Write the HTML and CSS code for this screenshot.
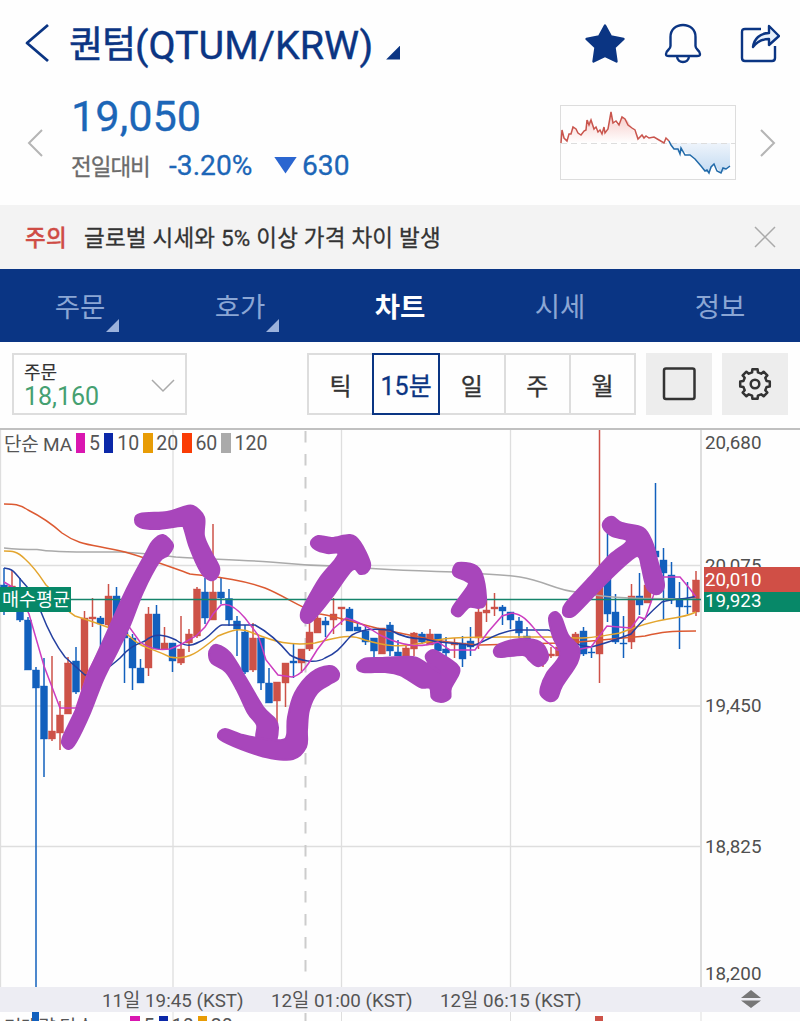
FILE: index.html
```html
<!DOCTYPE html>
<html lang="ko">
<head>
  <meta charset="UTF-8" />
  <title>퀀텀(QTUM/KRW)</title>
  <link rel="stylesheet" href="styles.css">
</head>
<body>
  <header class="topbar">
    <svg class="back" width="26" height="42" viewBox="0 0 26 42"><path d="M24 3L3 21L24 39" /></svg>
    <h1><span class="name">퀀텀</span><span class="pair">(QTUM/KRW)</span></h1>
    <span class="corner corner-title"></span>
    <div class="actions">
      <svg width="42" height="42" viewBox="0 0 42 42"><path class="star" d="M21 3.500L27 14.500L39.500 17L30.500 25.500L32.500 39.500L21 34L9.500 39.500L11.500 25.500L2.500 17L15 14.500Z" /></svg>
      <svg width="38" height="42" viewBox="0 0 38 42"><path d="M6.500 24V15C6.500 7.500 12 3 19 3S31.500 7.500 31.500 15V24C31.500 28 36 28 36 32C36 34 35 34 33 34H5C3 34 2 34 2 32C2 28 6.500 28 6.500 24ZM13 34C13 42 25 42 25 34" /></svg>
      <svg width="40" height="42" viewBox="0 0 40 42"><path d="M21 7H5Q2 7 2 10V36Q2 39 5 39H32Q35 39 35 36V24" /><path class="arrow" d="M13 25C14 17 20 11 29 11V4L39 14L29 23V17C22 17 17 20 13 25Z" /></svg>
    </div>
  </header>

  <section class="quote">
    <svg class="prev" width="16" height="28" viewBox="0 0 16 28"><path d="M15 1L2 14L15 27" /></svg>
    <div class="price">
      <strong>19,050</strong>
      <div class="change">
        <span class="label">전일대비</span>
        <span class="rate">-3.20%</span>
        <span class="down"></span>
        <span class="diff">630</span>
      </div>
    </div>
    <svg class="spark" width="176" height="75" viewBox="0 0 176 75">
      <defs>
        <linearGradient id="up" x1="0" y1="0" x2="0" y2="1"><stop offset="0" stop-color="#f6c5c2" /><stop offset="1" stop-color="#fff" /></linearGradient>
        <linearGradient id="dn" x1="0" y1="0" x2="0" y2="1"><stop offset="0" stop-color="#eef4fb" /><stop offset="1" stop-color="#c3dbf2" /></linearGradient>
      </defs>
      <rect class="frame" x=".5" y=".5" width="175" height="74" />
      <path class="area-up" d="M1 38L2 25L6 36L10 29L13 21L20 30L25 25L27 15L31 16L35 25L42 28L47 27L51 7L53 18L59 20L63 12L68 16L74 26L79 32L84 31L94 33L103 37L110 38Z" />
      <path class="area-dn" d="M110 38L113 43L119 48L125 47L134 52L145 66L149 68L154 59L161 68L170 62V38Z" />
      <path class="base" d="M1 38.500H175" />
      <path class="spark-up" d="M1 38L2 25L4 33L7 36L9 29L11 29L13 22L16 24L18 28L21 30L24 26L26 25L27 15L29 20L31 15L34 24L36 22L38 27L40 25L42 29L44 22L45 28L48 24L51 7L53 18L56 16L59 20L62 12L65 14L68 20L72 23L75 25L78 34L82 30L84 33L86 31L89 33L94 32L99 35L104 38L106 33L109 36" />
      <path class="spark-dn" d="M109 36L111 40L114 44L118 44L120 49L121 43L125 50L130 50L135 54L141 61L145 66L147 65L149 68L151 62L154 59L157 66L161 68L163 63L166 64L170 61" />
    </svg>
    <svg class="next" width="16" height="28" viewBox="0 0 16 28"><path d="M1 1L14 14L1 27" /></svg>
  </section>

  <div class="notice">
    <b>주의</b>
    <span>글로벌 시세와 5% 이상 가격 차이 발생</span>
    <svg width="22" height="22" viewBox="0 0 22 22"><path d="M1 1L21 21M21 1L1 21" /></svg>
  </div>

  <nav class="tabs">
    <a>주문<i class="corner"></i></a>
    <a>호가<i class="corner"></i></a>
    <a class="active">차트</a>
    <a>시세</a>
    <a>정보</a>
  </nav>

  <div class="toolbar">
    <div class="order">
      <div>
        <div class="order-label">주문</div>
        <div class="order-price">18,160</div>
      </div>
      <svg width="24" height="14" viewBox="0 0 24 14"><path d="M1 1L12 12L23 1" /></svg>
    </div>
    <div class="periods">
      <button>틱</button>
      <button class="selected">15분</button>
      <button>일</button>
      <button>주</button>
      <button>월</button>
    </div>
    <button class="tool"><svg width="34" height="34" viewBox="0 0 34 34"><rect x="2" y="1.500" width="30.500" height="30.500" rx="2" /></svg></button>
    <button class="tool"><svg width="34" height="34" viewBox="0 0 34 34"><path d="M14.400 2.200H19.600L19.900 5.400L23.200 6.700L25.600 4.700L29.300 8.400L27.300 10.800L28.600 14.100L31.800 14.400V19.600L28.600 19.900L27.300 23.200L29.300 25.600L25.600 29.300L23.200 27.300L19.900 28.600L19.600 31.800H14.400L14.100 28.600L10.800 27.300L8.400 29.300L4.700 25.600L6.700 23.200L5.400 19.900L2.200 19.600V14.400L5.400 14.100L6.700 10.800L4.700 8.400L8.400 4.700L10.800 6.700L14.100 5.400Z" /><circle cx="17" cy="17" r="4.300" /></svg></button>
  </div>

  <main class="chart">
    <div class="legend">
      <span class="ma-name">단순 MA</span><i class="m5"></i><span>5</span><i class="m10"></i><span>10</span><i class="m20"></i><span>20</span><i class="m60"></i><span>60</span><i class="m120"></i><span>120</span>
    </div>
    <svg class="plot" width="800" height="558" viewBox="0 429 800 558">
      <g class="grid">
        <path d="M.5 429V987M173 429V987M341.500 429V987M510.500 429V987M0 565.500H701M0 706H701M0 846.500H701" />
        <path class="edge" d="M701 429V987" />
        <path class="day" d="M305.500 431V979" />
      </g>
      <g id="candles"></g>
      <g class="ma">
        <path class="l120" d="M4 548C14 549 25 549.500 37 549.500C50 552 70 552.500 120 552C145 553 160 555 176 557C200 559 240 559.500 270 562C300 565 320 566 345 566.500C370 569 420 571 455 572C480 574 500 574 520 577C545 581 555 590 576 592C600 597 620 598 645 598.500L696 599" />
        <path class="l60" d="M4 504C13 504 20 504 28 510C44 518 52 524 62 533C80 546 92 544 125 552C150 559 170 567 190 574C215 577 240 579 265 588C285 596 300 608 320 614C345 618 370 628 395 632C415 636 440 643 480 645L560 643C600 641 620 638 645 636C662 632 670 631 696 631" />
        <path class="l20" d="M4 551C12 551 17 551 25 559C35 568 40 576 46 585C55 592 60 607 75 616C95 622 110 628 128 635C142 649 150 647 170 657C188 661 200 651 218 636C232 630 240 627 253 633C275 642 290 646 315 643C335 638 348 633 365 640C385 646 400 648 423 643C450 635 480 638 500 637L560 637C585 640 600 636 620 633C640 625 655 621 668 619C682 617 690 615 696 612" />
        <path class="l10" d="M4 568C12 569 13 570 21 580C30 590 35 595 41 612C48 630 58 648 65 657L85 675C100 675 110 667 120 658C130 646 138 644 145 641C155 632 165 635 176 640C184 646 190 647 199 642C210 638 216 626 222 625H255C270 633 280 643 290 655C300 661 316 664 325 658C340 652 345 641 352 635C365 628 375 629 390 630C400 636 412 639 425 639C440 644 455 642 472 646C485 642 497 632 515 630L548 630C565 634 570 646 591 647C604 644 615 640 631 634C645 617 654 609 662 602C675 598 685 600 696 596" />
        <path class="l5" d="M4 582L16 589L29 614L44 666L60 708H76L88 672L108 634L125 621L140 642C152 650 160 650 170 649L180 645L196 636L205 627L213 614L221 605C228 603 235 606 245 618L258 635L266 660L278 675L292 677C303 675 310 661 317 650L333 629L346 618C358 621 371 629 380 635L391 640C407 646 420 648 438 642L450 650H475L488 632L502 616L512 613C528 615 532 629 546 641L557 650H575L591 647L607 626L631 628L639 617L645 619L655 591L663 577H680L690 589L696 597" />
      </g>
      <path class="avg-line" d="M0 599.500H701" />
      <g id="pen"></g>
      <g class="axis">
        <text x="705" y="449">20,680</text>
        <text x="705" y="572">20,075</text>
        <text x="705" y="712">19,450</text>
        <text x="705" y="853">18,825</text>
        <text x="705" y="980">18,200</text>
      </g>
      <rect class="tag-avg" x="704" y="592" width="96" height="20" />
      <rect class="tag-now" x="704" y="567" width="96" height="25" />
      <text class="tag" x="705" y="586">20,010</text>
      <text class="tag" x="705" y="607">19,923</text>
      <rect class="tag-avg" x="0" y="587" width="71" height="25" />
      <text class="tag tag-name" x="2" y="606">매수평균</text>
    </svg>
  </main>

  <div class="times">
    <span>11일 19:45 (KST)</span>
    <span>12일 01:00 (KST)</span>
    <span>12일 06:15 (KST)</span>
    <svg width="20" height="18" viewBox="0 0 20 18"><path d="M0 8L10 0L20 8ZM0 10.500H20L10 18Z" /></svg>
  </div>

  <div class="volume">
    <svg width="800" height="9" viewBox="0 0 800 9">
      <path class="vgrid" d="M173 0V9M341.500 0V9M510.500 0V9M701 0V9" />
      <path class="vday" d="M305.500 1V9" />
      <rect class="vup" x="595" y="4" width="8" height="5" />
    </svg>
    <div class="legend">
      <span class="ma-name">거래량 단순 MA</span><i class="m5"></i><span>5</span><i class="m10"></i><span>10</span><i class="m20"></i><span>20</span>
    </div>
    <div class="vdown"></div>
  </div>

  <script src="script.js"></script>
</body>
</html>
```

FILE: styles.css
```css
* {
  box-sizing: border-box;
}
body {
  margin: 0;
  width: 800px;
  height: 1021px;
  overflow: hidden;
  background: #fefefe;
  color: #333;
  font-family: Roboto, "Noto Sans CJK KR", sans-serif;
}
svg {
  display: block;
  flex: none;
}
path {
  fill: none;
}

/* header */
.topbar {
  display: flex;
  align-items: center;
  height: 88px;
  padding: 0 20px 0 24px;
}
.topbar svg {
  stroke: #0b3583;
  stroke-width: 2.4;
  stroke-linejoin: round;
}
h1 {
  display: flex;
  align-items: center;
  margin: 4px 0 0 19px;
  color: #0b3583;
  font-size: 39.5px;
  font-weight: 400;
  line-height: 50px;
  white-space: nowrap;
}
.name {
  font-size: 37px;
  letter-spacing: -1px;
  -webkit-text-stroke: 0.5px;
}
.pair {
  -webkit-text-stroke: 0.4px;
}
.corner {
  width: 14px;
  height: 14px;
  background: #0b3583;
  clip-path: polygon(100% 0, 100% 100%, 0 100%);
}
.corner-title {
  margin: 17px 0 0 13px;
}
.topbar .back {
  stroke-width: 2.8;
  margin-bottom: 2px;
}
.actions {
  display: flex;
  gap: 38px;
  margin: 0 0 2px auto;
}
.actions .star {
  fill: #0b3583;
}
.actions .arrow {
  fill: #e6effa;
}

/* current price */
.quote {
  display: flex;
  height: 117px;
  padding: 6px 24px 0 27px;
}
.prev,
.next {
  margin-top: 35px;
  stroke: #b5b5b5;
  stroke-width: 2;
}
.price {
  width: 489px;
  margin-left: 28px;
  color: #1c66b7;
  -webkit-text-stroke: 0.3px;
}
.price strong {
  display: block;
  font-size: 43.3px;
  font-weight: 400;
  line-height: 46px;
}
.change {
  display: flex;
  align-items: center;
  height: 50px;
  font-size: 28.2px;
  white-space: nowrap;
}
.label {
  width: 98px;
  color: #6b6b6b;
  font-size: 22.5px;
  letter-spacing: -1px;
}
.rate {
  width: 105px;
}
.down {
  width: 23px;
  height: 17px;
  margin-right: 5px;
  background: #2b66d0;
  clip-path: polygon(0 0, 100% 0, 50% 100%);
}
.spark {
  margin-top: 11px;
}
.next {
  margin-left: 24px;
}
.frame {
  fill: none;
  stroke: #ddd;
}
.area-up {
  fill: url(#up);
}
.area-dn {
  fill: url(#dn);
}
.base {
  stroke: #ddd;
  stroke-dasharray: 6 4;
}
.spark-up {
  stroke: #c9554d;
  stroke-width: 1.5;
}
.spark-dn {
  stroke: #216aa9;
  stroke-width: 1.5;
}

/* warning */
.notice {
  display: flex;
  align-items: center;
  height: 64px;
  padding: 0 24px 3px 25px;
  background: #f3f3f3;
  font-size: 22.5px;
  letter-spacing: 0.2px;
  -webkit-text-stroke: 0.3px;
}
.notice b {
  width: 59px;
  color: #cf4c45;
  font-weight: 500;
}
.notice svg {
  margin: 3px 0 0 auto;
  stroke: #aaa;
  stroke-width: 1.5;
}

/* tabs */
.tabs {
  display: flex;
  height: 73px;
  background: #0a3584;
}
.tabs a {
  position: relative;
  width: 160px;
  padding-top: 2px;
  color: #8ba6d4;
  font-size: 27.5px;
  line-height: 73px;
  text-align: center;
}
.tabs .active {
  color: #fff;
  font-weight: 700;
}
.tabs .corner {
  position: absolute;
  right: 41px;
  bottom: 10px;
  width: 13px;
  height: 13px;
  background: #9bb2dc;
}

/* toolbar */
.toolbar {
  display: flex;
  height: 87px;
  padding: 11px 12px 0;
}
.order {
  display: flex;
  align-items: center;
  justify-content: space-between;
  width: 175px;
  height: 62px;
  margin-right: 120px;
  padding: 3px 10px 0 10px;
  border: 2px solid #ddd;
}
.order svg {
  stroke: #aaa;
  stroke-width: 1.5;
}
.order-label {
  font-size: 18px;
  line-height: 22px;
  -webkit-text-stroke: 0.2px;
}
.order-price {
  color: #45a071;
  font-size: 25px;
  line-height: 25px;
}
.periods {
  display: flex;
  width: 330px;
  height: 62px;
  border: 2px solid #ddd;
}
.toolbar button {
  padding: 0;
  border: 0;
  background: none;
  color: #333;
  font: inherit;
  font-size: 24px;
  -webkit-text-stroke: 0.3px;
}
.periods button {
  flex: 1;
  border-right: 2px solid #ddd;
}
.periods button:last-child {
  border-right: 0;
}
.toolbar .selected {
  flex: none;
  width: 68px;
  margin: -2px 0 -2px -2px;
  border: 2px solid #0b3583;
  color: #0b3583;
  font-size: 25px;
}
.toolbar .tool {
  display: flex;
  align-items: center;
  justify-content: center;
  width: 66px;
  height: 62px;
  margin-left: 10px;
  background: #ededed;
}
.tool svg {
  fill: none;
  stroke: #333;
  stroke-width: 2.5;
  stroke-linejoin: round;
}

/* chart */
.chart {
  position: relative;
  height: 558px;
}
.chart::before {
  content: "";
  position: absolute;
  top: -1px;
  width: 100%;
  height: 2px;
  background: #c0c0c0;
}
.legend {
  position: absolute;
  top: 3px;
  left: 4px;
  display: flex;
  align-items: center;
  height: 22px;
  color: #555;
  font-size: 19.5px;
  white-space: nowrap;
}
.legend i {
  width: 9.5px;
  height: 20px;
  margin: 0 3.7px 0 4px;
}
.ma-name {
  padding-bottom: 2px;
  font-size: 19px;
  letter-spacing: -0.2px;
}
.m5 { background: #d916b0; }
.m10 { background: #0b28a8; }
.m20 { background: #e89c05; }
.m60 { background: #fa3c05; }
.m120 { background: #aaa; }
.grid path {
  stroke: #dedede;
  stroke-width: 1.3;
}
.grid .edge {
  stroke-width: 2;
}
.grid .day {
  stroke: #ccc;
  stroke-width: 2;
  stroke-dasharray: 11.500 11.500;
}
.up { fill: #cd5248; stroke: #cd5248; }
.dn { fill: #1260bd; stroke: #1260bd; }
.ma path {
  stroke-width: 1.5;
}
.ma .l120 { stroke: #aaa; }
.ma .l60 { stroke: #dc5a32; }
.ma .l20 { stroke: #e3a52e; }
.ma .l10 { stroke: #2440a0; }
.ma .l5 { stroke: #cc3dc0; }
.avg-line {
  stroke: #16846b;
  stroke-width: 1.6;
}
#pen path {
  fill: #a846bb;
  stroke: #a846bb;
  stroke-width: 2;
}
.axis text {
  fill: #505050;
  font-size: 18.8px;
}
.tag {
  fill: #fff;
  font-size: 18.8px;
}
.tag-name {
  font-size: 18.5px;
}
.tag-avg { fill: #078868; }
.tag-now { fill: #d04f46; }

/* time axis */
.times {
  display: flex;
  align-items: center;
  height: 25px;
  padding: 0 0 3px 102px;
  background: #ededf3;
  color: #555;
  font-size: 18.8px;
  white-space: nowrap;
}
.times span {
  width: 169px;
}
.times svg {
  margin: 2px 0 0 132px;
}
.times path {
  fill: #777;
}

/* volume */
.volume {
  position: relative;
  height: 9px;
  overflow: hidden;
}
.volume .ma-name {
  letter-spacing: -0.4px;
}
.vgrid { stroke: #dedede; }
.vday { stroke: #ccc; stroke-width: 2; }
.vdown {
  position: absolute;
  top: 0;
  left: 32px;
  width: 7px;
  height: 9px;
  background: #1260bd;
}
.vup { fill: #cd5248; }
```

FILE: script.js
```js
// x, high, body top, body bottom, low, up (1) or down (0)
const candles = [
  [4, 568, 585, 600, 615, 0], [12, 570, 586, 606, 610, 1], [20, 578, 590, 620, 622, 0],
  [28, 617, 620, 670, 670, 0], [36, 667, 670, 688, 987, 0], [44, 658, 686, 739, 777, 0],
  [52, 656, 731, 739, 741, 1], [60, 701, 715, 733, 750, 1], [68, 657, 663, 714, 714, 1],
  [76, 647, 661, 692, 694, 0], [84.5, 611, 618, 690, 692, 1], [92.5, 598, 617, 619, 627, 1],
  [100.5, 616, 618, 624, 647, 0], [108.5, 584, 596, 625, 627, 1], [116.5, 587, 596, 620, 625, 0],
  [124.5, 628, 632, 638, 683, 0], [132.5, 634, 638, 668, 690, 0], [140.5, 659, 668, 683, 683, 0],
  [148.5, 607, 614, 668, 676, 1], [156.5, 605, 614, 649, 649, 0], [164.5, 627, 643, 649, 649, 1],
  [172.5, 643, 643, 661, 672, 0], [181, 616, 649, 663, 665, 1], [189, 629, 634, 643, 652, 1],
  [197, 587, 589, 636, 638, 1], [205, 578, 592, 618, 624, 0], [213, 524, 592, 620, 620, 1],
  [221, 578, 592, 598, 604, 0], [229, 589, 598.5, 620, 626, 0], [237, 616, 621, 629, 656, 0],
  [245, 625, 632, 672, 674, 0], [253, 623, 638, 670, 672, 1], [261, 638, 638, 683, 690, 0],
  [269, 668, 683, 703, 703, 0], [277, 682, 682, 701, 727, 1], [285.5, 663, 663, 683, 707, 1],
  [293.5, 643, 661, 663, 678, 0], [301.5, 649, 649, 663, 673, 1], [309.5, 620, 632, 649, 651, 1],
  [317.5, 616, 618, 633, 633, 1], [325.5, 617, 621, 625, 637, 0], [333.5, 598, 614, 620, 634, 1],
  [341.5, 607, 607, 609, 625, 1], [349.5, 607, 609, 631, 631, 0], [357.5, 623, 627, 631, 631, 0],
  [365.5, 626, 631, 642, 645, 0], [374, 638, 638, 651, 658, 0], [382, 628, 628, 654, 654, 1],
  [390, 622, 625, 651, 656, 0], [398, 640, 652, 656, 656, 0], [406, 645, 648, 656, 656, 1],
  [414, 632, 633, 649, 656, 1], [422, 632, 634, 642, 644, 0], [430, 629, 634, 645, 645, 1],
  [438, 634, 634, 651, 651, 0], [446, 637, 649, 653, 658, 0], [454.5, 638, 643, 645, 658, 1],
  [462.5, 636, 643, 659, 667, 0], [470.5, 627, 641, 647, 656, 0], [478.5, 608, 612, 638, 649, 1],
  [486.5, 600, 610, 613, 622, 1], [494.5, 593, 607, 609, 616, 1], [502.5, 605, 607, 611, 625, 0],
  [510.5, 612, 612, 620, 629, 0], [519, 617, 621, 633, 638, 0], [527, 627, 636, 640, 640, 0],
  [535, 640, 642, 652, 655, 0], [543, 648, 652, 660, 667, 1], [551, 647, 654, 656, 658, 1],
  [559, 645, 647, 656, 656, 1], [567, 638, 640, 655, 655, 1], [575.5, 632, 634, 644, 646, 1],
  [583.5, 627, 631, 654, 656, 0], [591.5, 648, 652, 653, 658, 0], [599.5, 429, 585, 654, 683, 1],
  [607.5, 532, 578, 614, 622, 0], [615.5, 594, 612, 642, 644, 0], [623.5, 616, 643, 644, 658, 0],
  [631.5, 584, 596, 642, 649, 1], [639.5, 573, 596, 605, 615, 0], [647.5, 580, 585, 603, 603, 1],
  [655.5, 483, 551, 557, 575, 0], [663.5, 548, 560, 573, 620, 0], [671.5, 562, 575, 598, 604, 0],
  [679.5, 582, 599, 607, 649, 0], [687.5, 582, 606, 607, 614, 0], [696, 571, 580, 612, 616, 1]
];

document.getElementById('candles').innerHTML = candles.map(([x, high, top, bottom, low, up]) => `
  <g class="${up ? 'up' : 'dn'}">
    <path d="M${x} ${high}V${low}" stroke-width="1.5" />
    <rect x="${x - 3.5}" y="${top}" width="7" height="${bottom - top}" stroke-width=".4" />
  </g>`).join('');

// outlines of the hand-drawn arrows
const strokes = [
  [[63,737],[77,707],[87,677],[105,637],[123,597],[133,577],[145,555],[153,541],[163,535],[173,545],[168,555],[159,562],[143,592],[130,625],[118,650],[103,680],[90,713],[76,742],[69,749],[63,745]],
  [[135,520],[140,514],[167,512],[182,507.5],[193,506],[204,517],[204,536],[211,552],[219,567],[217,577],[210,580],[201,572],[190,548],[184,528],[181,526],[157,529],[140,527]],
  [[209,655],[211,648],[217,645],[230,653],[247,680],[263,707],[275,719],[278,728],[274,744],[257,739],[257,725],[248,713],[237,690],[226,672],[212,663]],
  [[218,735],[225,729],[243,735],[265,739],[282,740],[287,735],[288,717],[295,693],[311,673],[329,666],[338,671],[338,679],[330,684],[317,693],[309,710],[307,730],[306,747],[293,759],[270,758],[249,752],[223,741]],
  [[301,613],[305,604],[320,578],[335,560],[338,553],[327,553],[315,549],[311,542],[318,536],[332,538],[350,535],[360,542],[370,563],[367,572],[360,574],[352,570],[332,597],[315,618],[308,623],[302,620]],
  [[357,666],[364,659],[380,658],[400,657],[417,658],[437,671],[439,671],[428,662],[426,655],[433,650],[443,655],[457,665],[459,673],[451,688],[450,698],[441,702],[432,698],[430,688],[420,687],[400,675],[385,672],[363,672]],
  [[453,570],[458,563],[474,565],[482,574],[486,597],[484,606],[478,608],[469,607],[460,616],[453,614],[453,607],[468,586],[466,581],[455,576]],
  [[494,650],[500,644],[520,639],[540,642],[548,655],[545,663],[537,666],[529,660],[523,655],[502,657],[496,656]],
  [[549,618],[555,612],[561,617],[568,635],[579,648],[577,663],[562,686],[557,698],[549,701],[541,695],[541,687],[547,673],[560,655],[553,637]],
  [[563,610],[567,602],[590,577],[610,555],[627,541],[612,536],[603,527],[606,519],[613,517],[622,523],[643,528],[652,542],[658,563],[664,584],[661,592],[655,594],[647,588],[642,568],[639,557],[632,559],[607,582],[577,613],[569,617],[564,615]]
];

// closed Catmull-Rom curve through the points
function outline(p) {
  const n = p.length;
  let d = `M${p[0]}`;
  for (let i = 0; i < n; i++) {
    const a = p[(i + n - 1) % n], b = p[i], c = p[(i + 1) % n], e = p[(i + 2) % n];
    d += `C${b[0] + (c[0] - a[0]) / 6} ${b[1] + (c[1] - a[1]) / 6} ${c[0] - (e[0] - b[0]) / 6} ${c[1] - (e[1] - b[1]) / 6} ${c[0]} ${c[1]}`;
  }
  return d + 'Z';
}

document.getElementById('pen').innerHTML = strokes.map(p => `<path d="${outline(p)}" />`).join('');
```
